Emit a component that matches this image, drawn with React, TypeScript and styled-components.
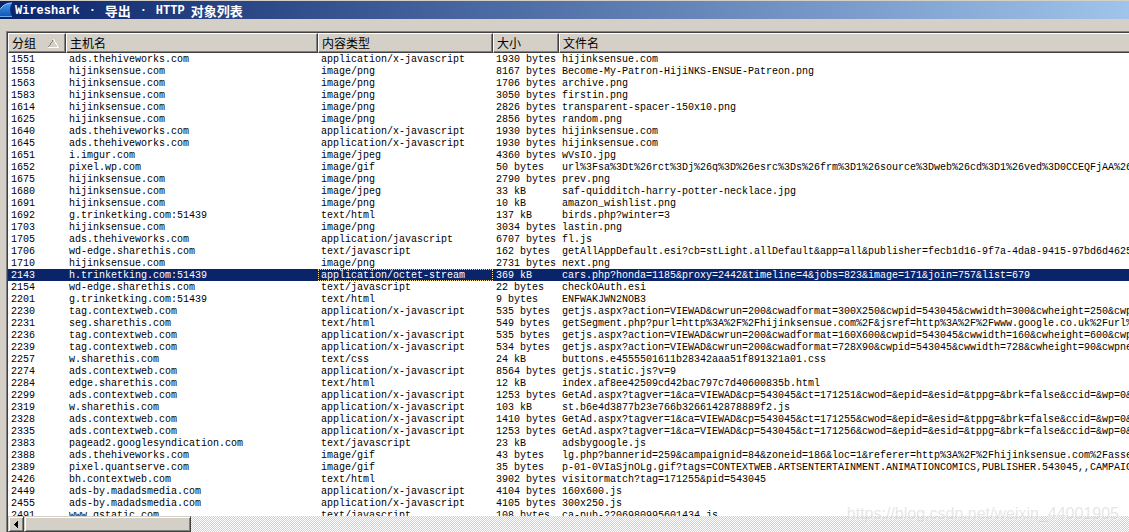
import React from "react";
import styled, { createGlobalStyle, css } from "styled-components";

const GlobalStyle = createGlobalStyle`
  *, *::before, *::after { box-sizing: border-box; }
  html, body, #root { height: 100%; }
  body {
    margin: 0;
    overflow: hidden;
    background: #d4d0c8;
    color: #000;
    font-family: "Liberation Mono", "Noto Sans CJK SC", monospace;
    font-size: 10px;
  }
`;

const Window = styled.main`
  position: relative;
  display: flex;
  flex-direction: column;
  height: 100vh;
  padding-top: 1px;
  background: #d4d0c8;
`;

const TitleBar = styled.header`
  display: flex;
  flex: none;
  align-items: center;
  gap: 2px;
  height: 18px;
  background: linear-gradient(to right, #0a246a, #a6caf0 104%);
  color: #fff;
`;

const Title = styled.h1`
  display: flex;
  gap: 6px;
  margin: 0;
  padding-top: 2px;
  font-size: 12px;
  font-weight: 700;
  line-height: 16px;
  white-space: nowrap;
`;

const Dot = styled.span`
  width: 13px;
  text-align: center;
`;

const Han = styled.span`
  font-family: "Noto Sans CJK SC", sans-serif;
  font-size: 13px;
`;

const ListView = styled.section`
  display: flex;
  flex: 1;
  flex-direction: column;
  min-height: 0;
  margin: 12px 0 0 6px;
  border-top: 1px solid #808080;
  border-left: 1px solid #808080;
  box-shadow: inset 1px 1px #404040;
  padding: 1px 0 0 1px;
`;

const TableArea = styled.div`
  flex: 1;
  min-height: 0;
  overflow: hidden;
  background: #fff;
`;

const Table = styled.table`
  width: 100%;
  table-layout: fixed;
  border-collapse: separate;
  border-spacing: 0;
`;

const HeaderCell = styled.th<{ $width?: number }>`
  width: ${(p) => (p.$width ? `${p.$width}px` : "auto")};
  height: 20px;
  padding: 0 0 0 3px;
  border: solid;
  border-width: 1px;
  border-color: #fff #404040 #404040 #fff;
  box-shadow: inset -1px -1px #808080;
  background: #d4d0c8;
  font-family: "Noto Sans CJK SC", sans-serif;
  font-size: 12px;
  font-weight: 400;
  line-height: 18px;
  text-align: left;
  white-space: nowrap;

  &:last-child {
    border-right: 0;
    box-shadow: inset 0 -1px #808080;
  }
`;

const SortButton = styled.button`
  display: flex;
  align-items: center;
  gap: 12px;
  padding: 0;
  border: 0;
  background: none;
  color: inherit;
  font: inherit;
`;

const Row = styled.tr<{ $selected: boolean }>`
  ${(p) =>
    p.$selected &&
    css`
      background: #0a246a;
      color: #fff;
    `}
`;

const Cell = styled.td<{ $focused?: boolean }>`
  height: 12px;
  padding: 2px 0 0 3px;
  overflow: hidden;
  line-height: 10px;
  white-space: pre;
  ${(p) =>
    p.$focused &&
    css`
      outline: 1px dotted #f5db95;
      outline-offset: -1px;
    `}
`;

const ScrollBar = styled.div`
  display: flex;
  flex: none;
  height: 16px;
  background: repeating-conic-gradient(#d4d0c8 0% 25%, #fff 0% 50%) 0 0 / 2px 2px;
`;

const raised = css`
  border: 1px solid;
  border-color: #d4d0c8 #404040 #404040 #d4d0c8;
  box-shadow: inset 1px 1px #fff, inset -1px -1px #808080;
  background: #d4d0c8;
`;

const ArrowButton = styled.button`
  ${raised}
  display: flex;
  align-items: center;
  justify-content: center;
  width: 16px;
  padding: 0;
`;

const Thumb = styled.div`
  ${raised}
  width: 167px;
`;

const Watermark = styled.div`
  position: absolute;
  right: 10px;
  bottom: 8px;
  color: rgba(180, 180, 180, 0.35);
  font-family: "Liberation Sans", sans-serif;
  font-size: 16px;
  line-height: 20px;
  text-shadow: 1px 1px rgba(255, 255, 255, 0.5);
  pointer-events: none;
`;

const JS = "application/x-javascript";
const TJS = "text/javascript";
const PNG = "image/png";
const JPEG = "image/jpeg";
const GIF = "image/gif";
const HTML = "text/html";
const HIJINKS = "hijinksensue.com";
const HIVE = "ads.thehiveworks.com";

type Entry = [packet: number, host: string, type: string, size: string, file: string];

const entries: Entry[] = [
  [1551, HIVE, JS, "1930 bytes", "hijinksensue.com"],
  [1558, HIJINKS, PNG, "8167 bytes", "Become-My-Patron-HijiNKS-ENSUE-Patreon.png"],
  [1563, HIJINKS, PNG, "1706 bytes", "archive.png"],
  [1583, HIJINKS, PNG, "3050 bytes", "firstin.png"],
  [1614, HIJINKS, PNG, "2826 bytes", "transparent-spacer-150x10.png"],
  [1625, HIJINKS, PNG, "2856 bytes", "random.png"],
  [1640, HIVE, JS, "1930 bytes", "hijinksensue.com"],
  [1645, HIVE, JS, "1930 bytes", "hijinksensue.com"],
  [1651, "i.imgur.com", JPEG, "4360 bytes", "wVsIO.jpg"],
  [1652, "pixel.wp.com", GIF, "50 bytes", "url%3Fsa%3Dt%26rct%3Dj%26q%3D%26esrc%3Ds%26frm%3D1%26source%3Dweb%26cd%3D1%26ved%3D0CCEQFjAA%26"],
  [1675, HIJINKS, PNG, "2790 bytes", "prev.png"],
  [1680, HIJINKS, JPEG, "33 kB", "saf-quidditch-harry-potter-necklace.jpg"],
  [1691, HIJINKS, PNG, "10 kB", "amazon_wishlist.png"],
  [1692, "g.trinketking.com:51439", HTML, "137 kB", "birds.php?winter=3"],
  [1703, HIJINKS, PNG, "3034 bytes", "lastin.png"],
  [1705, HIVE, "application/javascript", "6707 bytes", "fl.js"],
  [1706, "wd-edge.sharethis.com", TJS, "162 bytes", "getAllAppDefault.esi?cb=stLight.allDefault&app=all&publisher=fecb1d16-9f7a-4da8-9415-97bd6d4625"],
  [1710, HIJINKS, PNG, "2731 bytes", "next.png"],
  [2143, "h.trinketking.com:51439", "application/octet-stream", "369 kB", "cars.php?honda=1185&proxy=2442&timeline=4&jobs=823&image=171&join=757&list=679"],
  [2154, "wd-edge.sharethis.com", TJS, "22 bytes", "checkOAuth.esi"],
  [2201, "g.trinketking.com:51439", HTML, "9 bytes", "ENFWAKJWN2NOB3"],
  [2230, "tag.contextweb.com", JS, "535 bytes", "getjs.aspx?action=VIEWAD&cwrun=200&cwadformat=300X250&cwpid=543045&cwwidth=300&cwheight=250&cwp"],
  [2231, "seg.sharethis.com", HTML, "549 bytes", "getSegment.php?purl=http%3A%2F%2Fhijinksensue.com%2F&jsref=http%3A%2F%2Fwww.google.co.uk%2Furl%"],
  [2236, "tag.contextweb.com", JS, "535 bytes", "getjs.aspx?action=VIEWAD&cwrun=200&cwadformat=160X600&cwpid=543045&cwwidth=160&cwheight=600&cwp"],
  [2239, "tag.contextweb.com", JS, "534 bytes", "getjs.aspx?action=VIEWAD&cwrun=200&cwadformat=728X90&cwpid=543045&cwwidth=728&cwheight=90&cwpne"],
  [2257, "w.sharethis.com", "text/css", "24 kB", "buttons.e4555501611b28342aaa51f891321a01.css"],
  [2274, "ads.contextweb.com", JS, "8564 bytes", "getjs.static.js?v=9"],
  [2284, "edge.sharethis.com", HTML, "12 kB", "index.af8ee42509cd42bac797c7d40600835b.html"],
  [2299, "ads.contextweb.com", JS, "1253 bytes", "GetAd.aspx?tagver=1&ca=VIEWAD&cp=543045&ct=171251&cwod=&epid=&esid=&tppg=&brk=false&ccid=&wp=0&"],
  [2319, "w.sharethis.com", JS, "103 kB", "st.b6e4d3877b23e766b3266142878889f2.js"],
  [2328, "ads.contextweb.com", JS, "1410 bytes", "GetAd.aspx?tagver=1&ca=VIEWAD&cp=543045&ct=171255&cwod=&epid=&esid=&tppg=&brk=false&ccid=&wp=0&"],
  [2335, "ads.contextweb.com", JS, "1253 bytes", "GetAd.aspx?tagver=1&ca=VIEWAD&cp=543045&ct=171256&cwod=&epid=&esid=&tppg=&brk=false&ccid=&wp=0&"],
  [2383, "pagead2.googlesyndication.com", TJS, "23 kB", "adsbygoogle.js"],
  [2388, HIVE, GIF, "43 bytes", "lg.php?bannerid=259&campaignid=84&zoneid=186&loc=1&referer=http%3A%2F%2Fhijinksensue.com%2Fasse"],
  [2389, "pixel.quantserve.com", GIF, "35 bytes", "p-01-0VIaSjnOLg.gif?tags=CONTEXTWEB.ARTSENTERTAINMENT.ANIMATIONCOMICS,PUBLISHER.543045,,CAMPAIG"],
  [2426, "bh.contextweb.com", HTML, "3902 bytes", "visitormatch?tag=171255&pid=543045"],
  [2449, "ads-by.madadsmedia.com", JS, "4104 bytes", "160x600.js"],
  [2455, "ads-by.madadsmedia.com", JS, "4105 bytes", "300x250.js"],
  [2491, "www.gstatic.com", TJS, "108 bytes", "ca-pub-2206980995601434.js"],
];

const SELECTED = 2143;

const FinIcon = () => (
  <svg width="13" height="18" viewBox="0 0 13 18" aria-hidden="true">
    <defs>
      <linearGradient id="fin" x1="0" y1="0" x2="0" y2="1">
        <stop offset="0" stopColor="#3f9bf0" />
        <stop offset="1" stopColor="#1257b8" />
      </linearGradient>
    </defs>
    <path d="M0 9C2 5 6 2 12 2C9.500 6 9.500 11 12 15H0Z" fill="url(#fin)" />
    <path d="M0 8.500C2 5 6 2 12 2" fill="none" stroke="#a9d2f8" />
    <path d="M0 15.500H12" stroke="#6aa9ec" />
  </svg>
);

const SortArrow = () => (
  <svg width="11" height="9" viewBox="0 0 11 9" shapeRendering="crispEdges" aria-hidden="true">
    <path d="M0.5 8L5.5 0.5" stroke="#808080" fill="none" />
    <path d="M5.5 0.5L10.5 8.5H0" stroke="#fff" fill="none" />
  </svg>
);

export default function App() {
  return (
    <>
      <GlobalStyle />
      <Window>
        <TitleBar>
          <FinIcon />
          <Title>
            <span>Wireshark</span>
            <Dot>·</Dot>
            <Han>导出</Han>
            <Dot>·</Dot>
            <span>HTTP</span>
            <Han>对象列表</Han>
          </Title>
        </TitleBar>
        <ListView>
          <TableArea>
            <Table>
              <thead>
                <tr>
                  <HeaderCell $width={58} aria-sort="ascending">
                    <SortButton type="button">
                      分组
                      <SortArrow />
                    </SortButton>
                  </HeaderCell>
                  <HeaderCell $width={252}>主机名</HeaderCell>
                  <HeaderCell $width={175}>内容类型</HeaderCell>
                  <HeaderCell $width={66}>大小</HeaderCell>
                  <HeaderCell>文件名</HeaderCell>
                </tr>
              </thead>
              <tbody>
                {entries.map(([packet, host, type, size, file]) => (
                  <Row key={packet} $selected={packet === SELECTED}>
                    <Cell>{packet}</Cell>
                    <Cell>{host}</Cell>
                    <Cell $focused={packet === SELECTED}>{type}</Cell>
                    <Cell>{size}</Cell>
                    <Cell>{file}</Cell>
                  </Row>
                ))}
              </tbody>
            </Table>
          </TableArea>
          <ScrollBar>
            <ArrowButton type="button" aria-label="Scroll left">
              <svg width="4" height="7" viewBox="0 0 4 7" shapeRendering="crispEdges" aria-hidden="true">
                <path d="M4 0V7L0 3.5Z" />
              </svg>
            </ArrowButton>
            <Thumb />
          </ScrollBar>
        </ListView>
        <Watermark>https://blog.csdn.net/weixin_44001905</Watermark>
      </Window>
    </>
  );
}
